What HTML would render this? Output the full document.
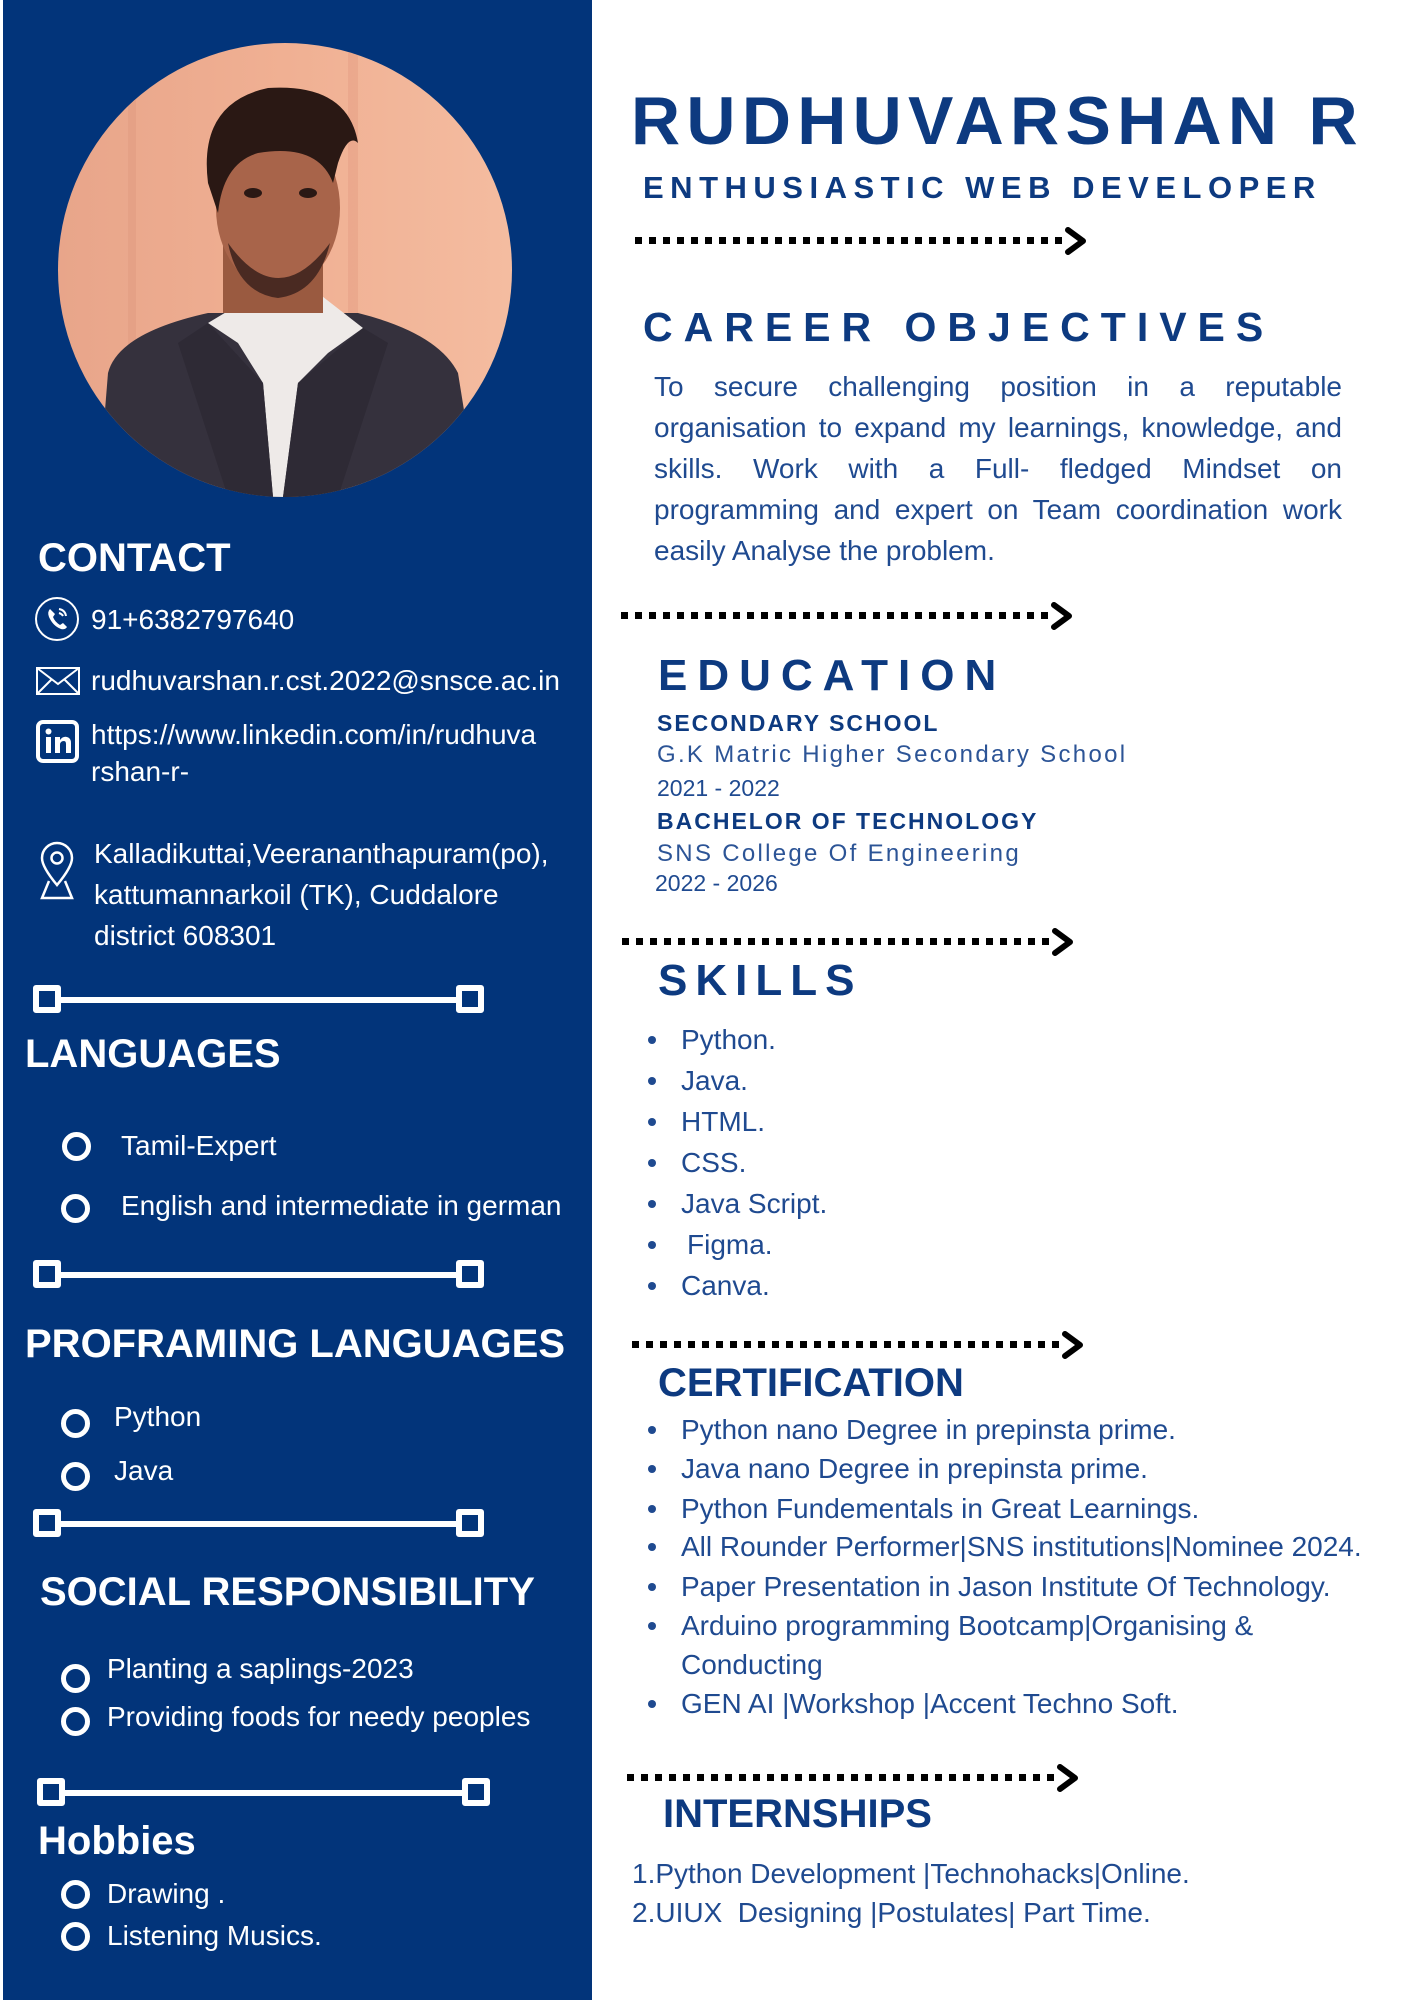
<!DOCTYPE html>
<html><head><meta charset="utf-8"><style>
*{margin:0;padding:0;box-sizing:border-box}
body{width:1414px;height:2000px;background:#fff;position:relative;overflow:hidden;font-family:"Liberation Sans",sans-serif}
.side{position:absolute;left:3px;top:0;width:589px;height:2000px;background:#02347a}
.a{position:absolute;white-space:nowrap}
.lh{font-size:39px;font-weight:bold;color:#fff}
.t{font-size:28px;color:#fff}
.ring{position:absolute;width:29px;height:29px;border:5px solid #fff;border-radius:50%}
.div{position:absolute;height:6px;background:#fff}
.sq{position:absolute;width:28px;height:28px;border:6px solid #fff;background:#02347a;border-radius:3px}
.rh{font-weight:bold;color:#0d3a80}
.rt{font-size:28px;color:#1f4a90}
.dots{position:absolute;height:7px;background:repeating-linear-gradient(90deg,#000 0 7px,transparent 7px 14px)}
.bul{position:absolute;left:648px;width:8px;height:8px;border-radius:50%;background:#1f4a90}
.j{position:absolute;left:654px;width:688px;text-align:justify;text-align-last:justify;white-space:nowrap;font-size:28px;color:#1f4a90}
</style></head><body>
<div class="side"></div>
<svg class="a" style="left:58px;top:43px" width="454" height="454" viewBox="0 0 454 454">
<defs><clipPath id="c"><circle cx="227" cy="227" r="227"/></clipPath>
<linearGradient id="bg" x1="0" x2="1"><stop offset="0" stop-color="#e8a58a"/><stop offset="0.5" stop-color="#f0b093"/><stop offset="1" stop-color="#f4bca0"/></linearGradient></defs>
<g clip-path="url(#c)">
<rect width="454" height="454" fill="url(#bg)"/>
<rect x="70" width="8" height="454" fill="#e09a80" opacity=".5"/><rect x="290" width="10" height="454" fill="#e59d84" opacity=".5"/>
<path d="M50 330 Q60 290 150 270 L300 270 Q380 290 400 330 L420 454 L40 454Z" fill="#35313d"/>
<path d="M150 280 L200 250 L260 250 L305 285 L270 310 L240 340 L225 454 L215 454 L205 340 L180 300Z" fill="#eeeae8"/>
<path d="M205 340 L150 280 L120 300 L170 454 L215 454Z" fill="#2e2a35"/>
<path d="M240 340 L305 285 L330 300 L280 454 L225 454Z" fill="#2e2a35"/>
<rect x="165" y="200" width="100" height="70" fill="#9a5a40"/>
<ellipse cx="220" cy="165" rx="62" ry="82" fill="#a8644a"/>
<path d="M150 140 Q140 60 210 45 Q290 40 300 100 Q290 90 280 120 L275 140 Q260 100 200 110 Q165 120 160 170Z" fill="#2a1814"/>
<ellipse cx="195" cy="150" rx="9" ry="5" fill="#2a1814"/><ellipse cx="250" cy="150" rx="9" ry="5" fill="#2a1814"/>
<path d="M170 200 Q220 270 272 200 Q260 250 220 255 Q180 250 170 200Z" fill="#4a2a22"/>
</g></svg>

<div class="a lh" style="left:38px;top:536px;font-size:40px">CONTACT</div>
<svg class="a" style="left:34px;top:596px" width="46" height="46" viewBox="0 0 46 46"><circle cx="23" cy="23" r="21" fill="none" stroke="#fff" stroke-width="2"/><path d="M16 13 Q13 16 15 21 Q19 30 27 33 Q31 34 33 31 L29 27 L26 29 Q21 26 19 21 L21 18Z" fill="#fff"/><path d="M25 13 Q31 14 32 20 M25 17 Q28 18 29 20" stroke="#fff" stroke-width="2" fill="none"/></svg>
<div class="a t" style="left:91px;top:604px">91+6382797640</div>
<svg class="a" style="left:36px;top:667px" width="44" height="28" viewBox="0 0 44 28"><rect x="1" y="1" width="42" height="26" fill="none" stroke="#fff" stroke-width="2"/><path d="M1 1 L22 17 L43 1 M1 27 L16 12 M43 27 L28 12" stroke="#fff" stroke-width="2" fill="none"/></svg>
<div class="a t" style="left:91px;top:665px">rudhuvarshan.r.cst.2022@snsce.ac.in</div>
<svg class="a" style="left:36px;top:720px" width="43" height="43" viewBox="0 0 43 43"><rect x="2" y="2" width="39" height="39" rx="5" fill="none" stroke="#fff" stroke-width="4"/><rect x="10" y="17" width="5" height="16" fill="#fff"/><circle cx="12.5" cy="11.5" r="3" fill="#fff"/><path d="M19 17 h5 v3 q3 -4 7 -3 q4 1 4 6 v10 h-5 v-9 q0 -3 -2 -3 q-4 0 -4 4 v8 h-5z" fill="#fff"/></svg>
<div class="a t" style="left:91px;top:719px">https://www.linkedin.com/in/rudhuva</div>
<div class="a t" style="left:91px;top:756px">rshan-r-</div>
<svg class="a" style="left:39px;top:841px" width="36" height="60" viewBox="0 0 36 60"><path d="M18 44 Q3 26 3 17 A15 15 0 0 1 33 17 Q33 26 18 44Z" fill="none" stroke="#fff" stroke-width="2.5"/><circle cx="18" cy="17" r="5.5" fill="none" stroke="#fff" stroke-width="2.5"/><path d="M10 40 L3 57 L33 57 L26 40" fill="none" stroke="#fff" stroke-width="2.5"/></svg>
<div class="a t" style="left:94px;top:833px;line-height:41px">Kalladikuttai,Veerananthapuram(po),<br>kattumannarkoil (TK), Cuddalore<br>district 608301</div>

<div class="div" style="left:45px;top:997px;width:430px"></div><div class="sq" style="left:33px;top:985px"></div><div class="sq" style="left:456px;top:985px"></div>
<div class="a lh" style="left:25px;top:1032px;font-size:40px">LANGUAGES</div>
<div class="ring" style="left:62px;top:1132px"></div><div class="a t" style="left:121px;top:1130px">Tamil-Expert</div>
<div class="ring" style="left:61px;top:1194px"></div><div class="a t" style="left:121px;top:1190px">English and intermediate in german</div>

<div class="div" style="left:45px;top:1272px;width:430px"></div><div class="sq" style="left:33px;top:1260px"></div><div class="sq" style="left:456px;top:1260px"></div>
<div class="a lh" style="left:25px;top:1322px;font-size:40px">PROFRAMING LANGUAGES</div>
<div class="ring" style="left:61px;top:1409px"></div><div class="a t" style="left:114px;top:1401px">Python</div>
<div class="ring" style="left:61px;top:1462px"></div><div class="a t" style="left:114px;top:1455px">Java</div>

<div class="div" style="left:45px;top:1521px;width:430px"></div><div class="sq" style="left:33px;top:1509px"></div><div class="sq" style="left:456px;top:1509px"></div>
<div class="a lh" style="left:40px;top:1570px;font-size:40px">SOCIAL RESPONSIBILITY</div>
<div class="ring" style="left:61px;top:1664px"></div><div class="a t" style="left:107px;top:1653px">Planting a saplings-2023</div>
<div class="ring" style="left:61px;top:1707px"></div><div class="a t" style="left:107px;top:1701px">Providing foods for needy peoples</div>

<div class="div" style="left:50px;top:1790px;width:430px"></div><div class="sq" style="left:37px;top:1778px"></div><div class="sq" style="left:462px;top:1778px"></div>
<div class="a lh" style="left:38px;top:1819px;font-size:40px">Hobbies</div>
<div class="ring" style="left:61px;top:1880px"></div><div class="a t" style="left:107px;top:1878px">Drawing .</div>
<div class="ring" style="left:61px;top:1922px"></div><div class="a t" style="left:107px;top:1920px">Listening Musics.</div>

<div class="a rh" style="left:631px;top:82px;font-size:68px;letter-spacing:6.3px">RUDHUVARSHAN R</div>
<div class="a rh" style="left:643px;top:170px;font-size:31px;letter-spacing:6.5px">ENTHUSIASTIC WEB DEVELOPER</div>
<div class="dots" style="left:635px;top:237px;width:434px"></div>
<svg class="a" style="left:1063px;top:226px" width="26" height="30"><path d="M5 4 L20 15 L5 26" stroke="#000" stroke-width="6" fill="none" stroke-linecap="round" stroke-linejoin="round"/></svg>

<div class="a rh" style="left:643px;top:304px;font-size:41px;letter-spacing:11px">CAREER OBJECTIVES</div>
<div class="j" style="top:371px">To secure challenging position in a reputable</div>
<div class="j" style="top:412px">organisation to expand my learnings, knowledge, and</div>
<div class="j" style="top:453px">skills. Work with a Full- fledged Mindset on</div>
<div class="j" style="top:494px">programming and expert on Team coordination work</div>
<div class="a rt" style="left:654px;top:535px">easily Analyse the problem.</div>

<div class="dots" style="left:621px;top:612px;width:434px"></div>
<svg class="a" style="left:1049px;top:601px" width="26" height="30"><path d="M5 4 L20 15 L5 26" stroke="#000" stroke-width="6" fill="none" stroke-linecap="round" stroke-linejoin="round"/></svg>

<div class="a rh" style="left:658px;top:651px;font-size:44px;letter-spacing:10px">EDUCATION</div>
<div class="a rh" style="left:657px;top:710px;font-size:23px;letter-spacing:2px">SECONDARY SCHOOL</div>
<div class="a" style="left:657px;top:741px;font-size:24px;letter-spacing:2.3px;color:#2c5496">G.K Matric Higher Secondary School</div>
<div class="a" style="left:657px;top:775px;font-size:23px;color:#1f4a90">2021 - 2022</div>
<div class="a rh" style="left:657px;top:808px;font-size:23px;letter-spacing:2px">BACHELOR OF TECHNOLOGY</div>
<div class="a" style="left:657px;top:840px;font-size:24px;letter-spacing:2.3px;color:#2c5496">SNS College Of Engineering</div>
<div class="a" style="left:655px;top:870px;font-size:23px;color:#1f4a90">2022 - 2026</div>

<div class="dots" style="left:622px;top:938px;width:434px"></div>
<svg class="a" style="left:1050px;top:927px" width="26" height="30"><path d="M5 4 L20 15 L5 26" stroke="#000" stroke-width="6" fill="none" stroke-linecap="round" stroke-linejoin="round"/></svg>
<div class="a rh" style="left:658px;top:956px;font-size:44px;letter-spacing:8px">SKILLS</div>

<div class="bul" style="top:1036px"></div><div class="a rt" style="left:681px;top:1024px">Python.</div>
<div class="bul" style="top:1077px"></div><div class="a rt" style="left:681px;top:1065px">Java.</div>
<div class="bul" style="top:1118px"></div><div class="a rt" style="left:681px;top:1106px">HTML.</div>
<div class="bul" style="top:1159px"></div><div class="a rt" style="left:681px;top:1147px">CSS.</div>
<div class="bul" style="top:1200px"></div><div class="a rt" style="left:681px;top:1188px">Java Script.</div>
<div class="bul" style="top:1241px"></div><div class="a rt" style="left:687px;top:1229px">Figma.</div>
<div class="bul" style="top:1282px"></div><div class="a rt" style="left:681px;top:1270px">Canva.</div>

<div class="dots" style="left:632px;top:1341px;width:434px"></div>
<svg class="a" style="left:1060px;top:1330px" width="26" height="30"><path d="M5 4 L20 15 L5 26" stroke="#000" stroke-width="6" fill="none" stroke-linecap="round" stroke-linejoin="round"/></svg>
<div class="a rh" style="left:658px;top:1361px;font-size:40px">CERTIFICATION</div>

<div class="bul" style="top:1426px"></div><div class="a rt" style="left:681px;top:1414px">Python nano Degree in prepinsta prime.</div>
<div class="bul" style="top:1465px"></div><div class="a rt" style="left:681px;top:1453px">Java nano Degree in prepinsta prime.</div>
<div class="bul" style="top:1505px"></div><div class="a rt" style="left:681px;top:1493px">Python Fundementals in Great Learnings.</div>
<div class="bul" style="top:1543px"></div><div class="a rt" style="left:681px;top:1531px">All Rounder Performer|SNS institutions|Nominee 2024.</div>
<div class="bul" style="top:1583px"></div><div class="a rt" style="left:681px;top:1571px">Paper Presentation in Jason Institute Of Technology.</div>
<div class="bul" style="top:1622px"></div><div class="a rt" style="left:681px;top:1610px">Arduino programming Bootcamp|Organising &amp;</div>
<div class="a rt" style="left:681px;top:1649px">Conducting</div>
<div class="bul" style="top:1700px"></div><div class="a rt" style="left:681px;top:1688px">GEN AI |Workshop |Accent Techno Soft.</div>

<div class="dots" style="left:627px;top:1774px;width:434px"></div>
<svg class="a" style="left:1055px;top:1763px" width="26" height="30"><path d="M5 4 L20 15 L5 26" stroke="#000" stroke-width="6" fill="none" stroke-linecap="round" stroke-linejoin="round"/></svg>
<div class="a rh" style="left:663px;top:1792px;font-size:40px">INTERNSHIPS</div>
<div class="a rt" style="left:632px;top:1858px">1.Python Development |Technohacks|Online.</div>
<div class="a rt" style="left:632px;top:1897px">2.UIUX&nbsp; Designing |Postulates| Part Time.</div>
</body></html>
